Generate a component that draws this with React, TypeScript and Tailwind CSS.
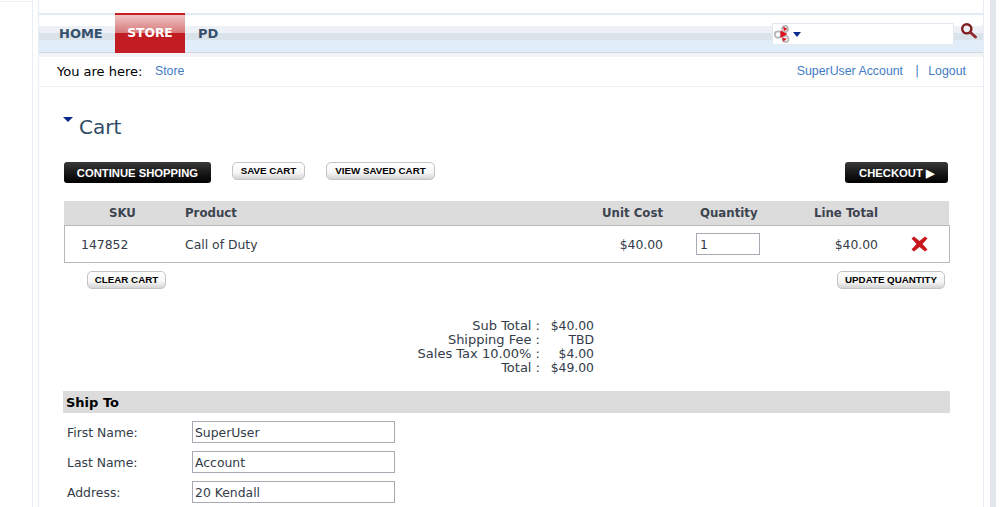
const font = "font-['DejaVu_Sans',Verdana,sans-serif]";
const arial = "font-['Liberation_Sans',Arial,sans-serif]";

function BlackButton({ label, className }: { label: string; className: string }) {
  return (
    <button
      className={`${arial} flex h-[21px] items-center justify-center rounded-[3px] bg-[linear-gradient(#3a3a3a,#1c1c1c_45%,#000)] pt-[1px] text-[11.25px] font-bold text-white ${className}`}
    >
      {label}
    </button>
  );
}

function WhiteButton({ label, className }: { label: string; className: string }) {
  return (
    <button
      className={`${arial} flex h-[18px] items-center justify-center rounded-[5px] border border-[#c4c4c4] bg-[linear-gradient(#ffffff,#f6f6f6_60%,#d4d4d4)] text-[9.75px] font-bold text-black ${className}`}
    >
      {label}
    </button>
  );
}

function FlagIcon() {
  return (
    <svg width="20" height="20" viewBox="0 0 20 20" fill="none">
      <circle cx="5" cy="10.5" r="3.2" stroke="#b4b4b4" strokeWidth="1.8" />
      <circle cx="12" cy="5" r="3" stroke="#bcbcbc" strokeWidth="1.8" />
      <circle cx="12.5" cy="15" r="3" stroke="#bcbcbc" strokeWidth="1.8" />
      <path d="M7.5 6.5l7 3.5-7 4z" fill="#e0121c" />
      <path d="M10 2.5l4.5 2.5-3.5 2z M9 14l5 .5-3.5 3z" fill="#e0121c" />
    </svg>
  );
}

function SearchIcon() {
  return (
    <svg width="18" height="18" viewBox="0 0 18 18" fill="none">
      <circle cx="6.8" cy="6.8" r="4.6" stroke="#7c1c1c" strokeWidth="2.4" />
      <path d="M10.5 10.5l5 4.5" stroke="#8e2a2a" strokeWidth="3" strokeLinecap="round" />
    </svg>
  );
}

function RemoveIcon() {
  return (
    <svg width="17" height="16" viewBox="0 0 17 16">
      <path
        d="M0.5 2.5L3 0.5L8.5 5L14 0.5L16.5 2.5L11.5 8L16.5 13.5L14 15.5L8.5 11L3 15.5L0.5 13.5L5.5 8Z"
        fill="#c8181e"
      />
    </svg>
  );
}

function Field({ label, value }: { label: string; value: string }) {
  return (
    <div className="flex h-[22px] items-center">
      <label className="w-[129px] pt-[3px] pl-[4px] text-[#333c48]">{label}</label>
      <input
        defaultValue={value}
        className="h-[22px] w-[203px] border border-[#a9a9b4] bg-white px-[2px] pt-[1px] text-[#333c48] outline-none"
      />
    </div>
  );
}

const totals = [
  ["Sub Total :", "$40.00"],
  ["Shipping Fee :", "TBD"],
  ["Sales Tax 10.00% :", "$4.00"],
  ["Total :", "$49.00"],
];

export default function App() {
  return (
    <div className={`${font} flex h-[507px] w-[1007px] overflow-hidden bg-white text-[12.4px] text-[#333c48]`}>
      <div className="w-[33px] shrink-0 border-r border-[#e8eef4]">
        <div className="mt-[1px] h-px bg-[#eef1f4]" />
      </div>
      <div className="ml-[5px] w-[946px] shrink-0 border-x border-[#e6edf5]">
        {/* nav */}
        <div className="mt-[13px] flex h-[40px] border-t-2 border-[#e0ecf8] bg-[linear-gradient(#ffffff_0,#ffffff_11px,#edf0f4_11px,#edf0f4_18px,#dbe3ea_18px,#dbe3ea_25px,#e1edf9_25px,#e1edf9_37px,#cfd9e4_37px)]">
          <span className="w-[76px] pt-[9px] pl-[20px] text-[13px] font-bold text-[#35506e]">HOME</span>
          <span className="-mt-[2px] h-[40px] w-[70px] border-t-2 border-[#c41e24] bg-[linear-gradient(#f0c4c4,#d67878_18px,#c01c22_18px,#c41e24)] pt-[9px] text-center text-[12.3px] font-bold text-white">
            STORE
          </span>
          <span className="pt-[9px] pl-[13px] text-[13px] font-bold text-[#35506e]">PD</span>
          <div className="ml-auto mt-[8px] flex h-[22px] w-[182px] items-center border border-[#e2e9f1] bg-white">
            <FlagIcon />
            <span className="h-0 w-0 border-x-[4px] border-t-[5px] border-x-transparent border-t-[#0a2a8c]" />
          </div>
          <div className="mt-[7px] ml-[6px] mr-[5px] h-[18px]">
            <SearchIcon />
          </div>
        </div>
        <div className="h-[4px] bg-[#f2f4f6]" />

        {/* breadcrumb */}
        <div className="flex h-[30px] items-center border-b border-[#eef1f4] pr-[17px] pl-[18px]">
          <span className="w-[98px] text-[13px] text-black">You are here:</span>
          <a className={`${arial} text-[12.3px] text-[#3f7cc4]`}>Store</a>
          <a className={`${arial} ml-auto text-[12.35px] text-[#3f7cc4]`}>SuperUser Account</a>
          <span className="ml-[12px] text-[#3f7cc4]">|</span>
          <a className={`${arial} ml-[9px] text-[12.35px] text-[#3f7cc4]`}>Logout</a>
        </div>

        <div className="pl-[24px] pr-[33px]">
          {/* title */}
          <div className="mt-[26px] flex h-[28px] items-center">
            <span className="mb-[16px] h-0 w-0 border-x-[5px] border-t-[5px] border-x-transparent border-t-[#0a2a8c]" />
            <h1 className="ml-[6px] text-[20px] text-[#2f4a64]">Cart</h1>
          </div>

          {/* actions */}
          <div className="mt-[21px] flex items-start pl-[1px]">
            <BlackButton label="CONTINUE SHOPPING" className="w-[147px]" />
            <WhiteButton label="SAVE CART" className="ml-[21px] w-[73px]" />
            <WhiteButton label="VIEW SAVED CART" className="ml-[21px] w-[109px]" />
            <BlackButton label="CHECKOUT ▶" className="ml-auto mr-[2px] w-[103px]" />
          </div>

          {/* cart table */}
          <div className="mt-[18px] ml-[1px] w-[886px]">
            <div className="grid h-[24px] w-[885px] grid-cols-[121px_1fr_100px_115px_100px_71px] items-center bg-[#dcdcdc] pt-[1px] text-[11.75px] font-bold text-[#3c4450]">
              <span className="pl-[45px]">SKU</span>
              <span>Product</span>
              <span className="text-right">Unit Cost</span>
              <span className="pl-[37px]">Quantity</span>
              <span className="text-right">Line Total</span>
              <span />
            </div>
            <div className="grid h-[38px] grid-cols-[120px_1fr_100px_115px_100px_71px] items-center border border-[#b8b8b8]">
              <span className="pt-[2px] pl-[16px]">147852</span>
              <span className="pt-[2px]">Call of Duty</span>
              <span className="pt-[2px] text-right">$40.00</span>
              <span className="flex pl-[33px]">
                <input
                  defaultValue="1"
                  className="h-[22px] w-[64px] border border-[#a9a9b4] px-[3px] outline-none"
                />
              </span>
              <span className="pt-[2px] text-right">$40.00</span>
              <span className="flex pl-[33px]">
                <RemoveIcon />
              </span>
            </div>
          </div>

          <div className="mt-[8px] flex pl-[24px] pr-[5px]">
            <WhiteButton label="CLEAR CART" className="w-[79px]" />
            <WhiteButton label="UPDATE QUANTITY" className="ml-auto w-[108px]" />
          </div>

          {/* totals */}
          <div className="mt-[30px] w-[531px] leading-[14px]">
            {totals.map(([label, value]) => (
              <div key={label} className="flex h-[14px] justify-end">
                <span className="text-right text-[13px]">{label}</span>
                <span className="w-[54px] text-right">{value}</span>
              </div>
            ))}
          </div>

          {/* ship to */}
          <div className="mt-[16px] flex h-[22px] w-[887px] items-center bg-[#dcdcdc] pt-[1px] pl-[3px] text-[13px] font-bold text-black">
            Ship To
          </div>
          <div className="mt-[8px] flex flex-col gap-[8px]">
            <Field label="First Name:" value="SuperUser" />
            <Field label="Last Name:" value="Account" />
            <Field label="Address:" value="20 Kendall" />
          </div>
        </div>
      </div>
      <div className="ml-[6px] h-full w-[6px] bg-[#e2e6ec]" />
    </div>
  );
}
